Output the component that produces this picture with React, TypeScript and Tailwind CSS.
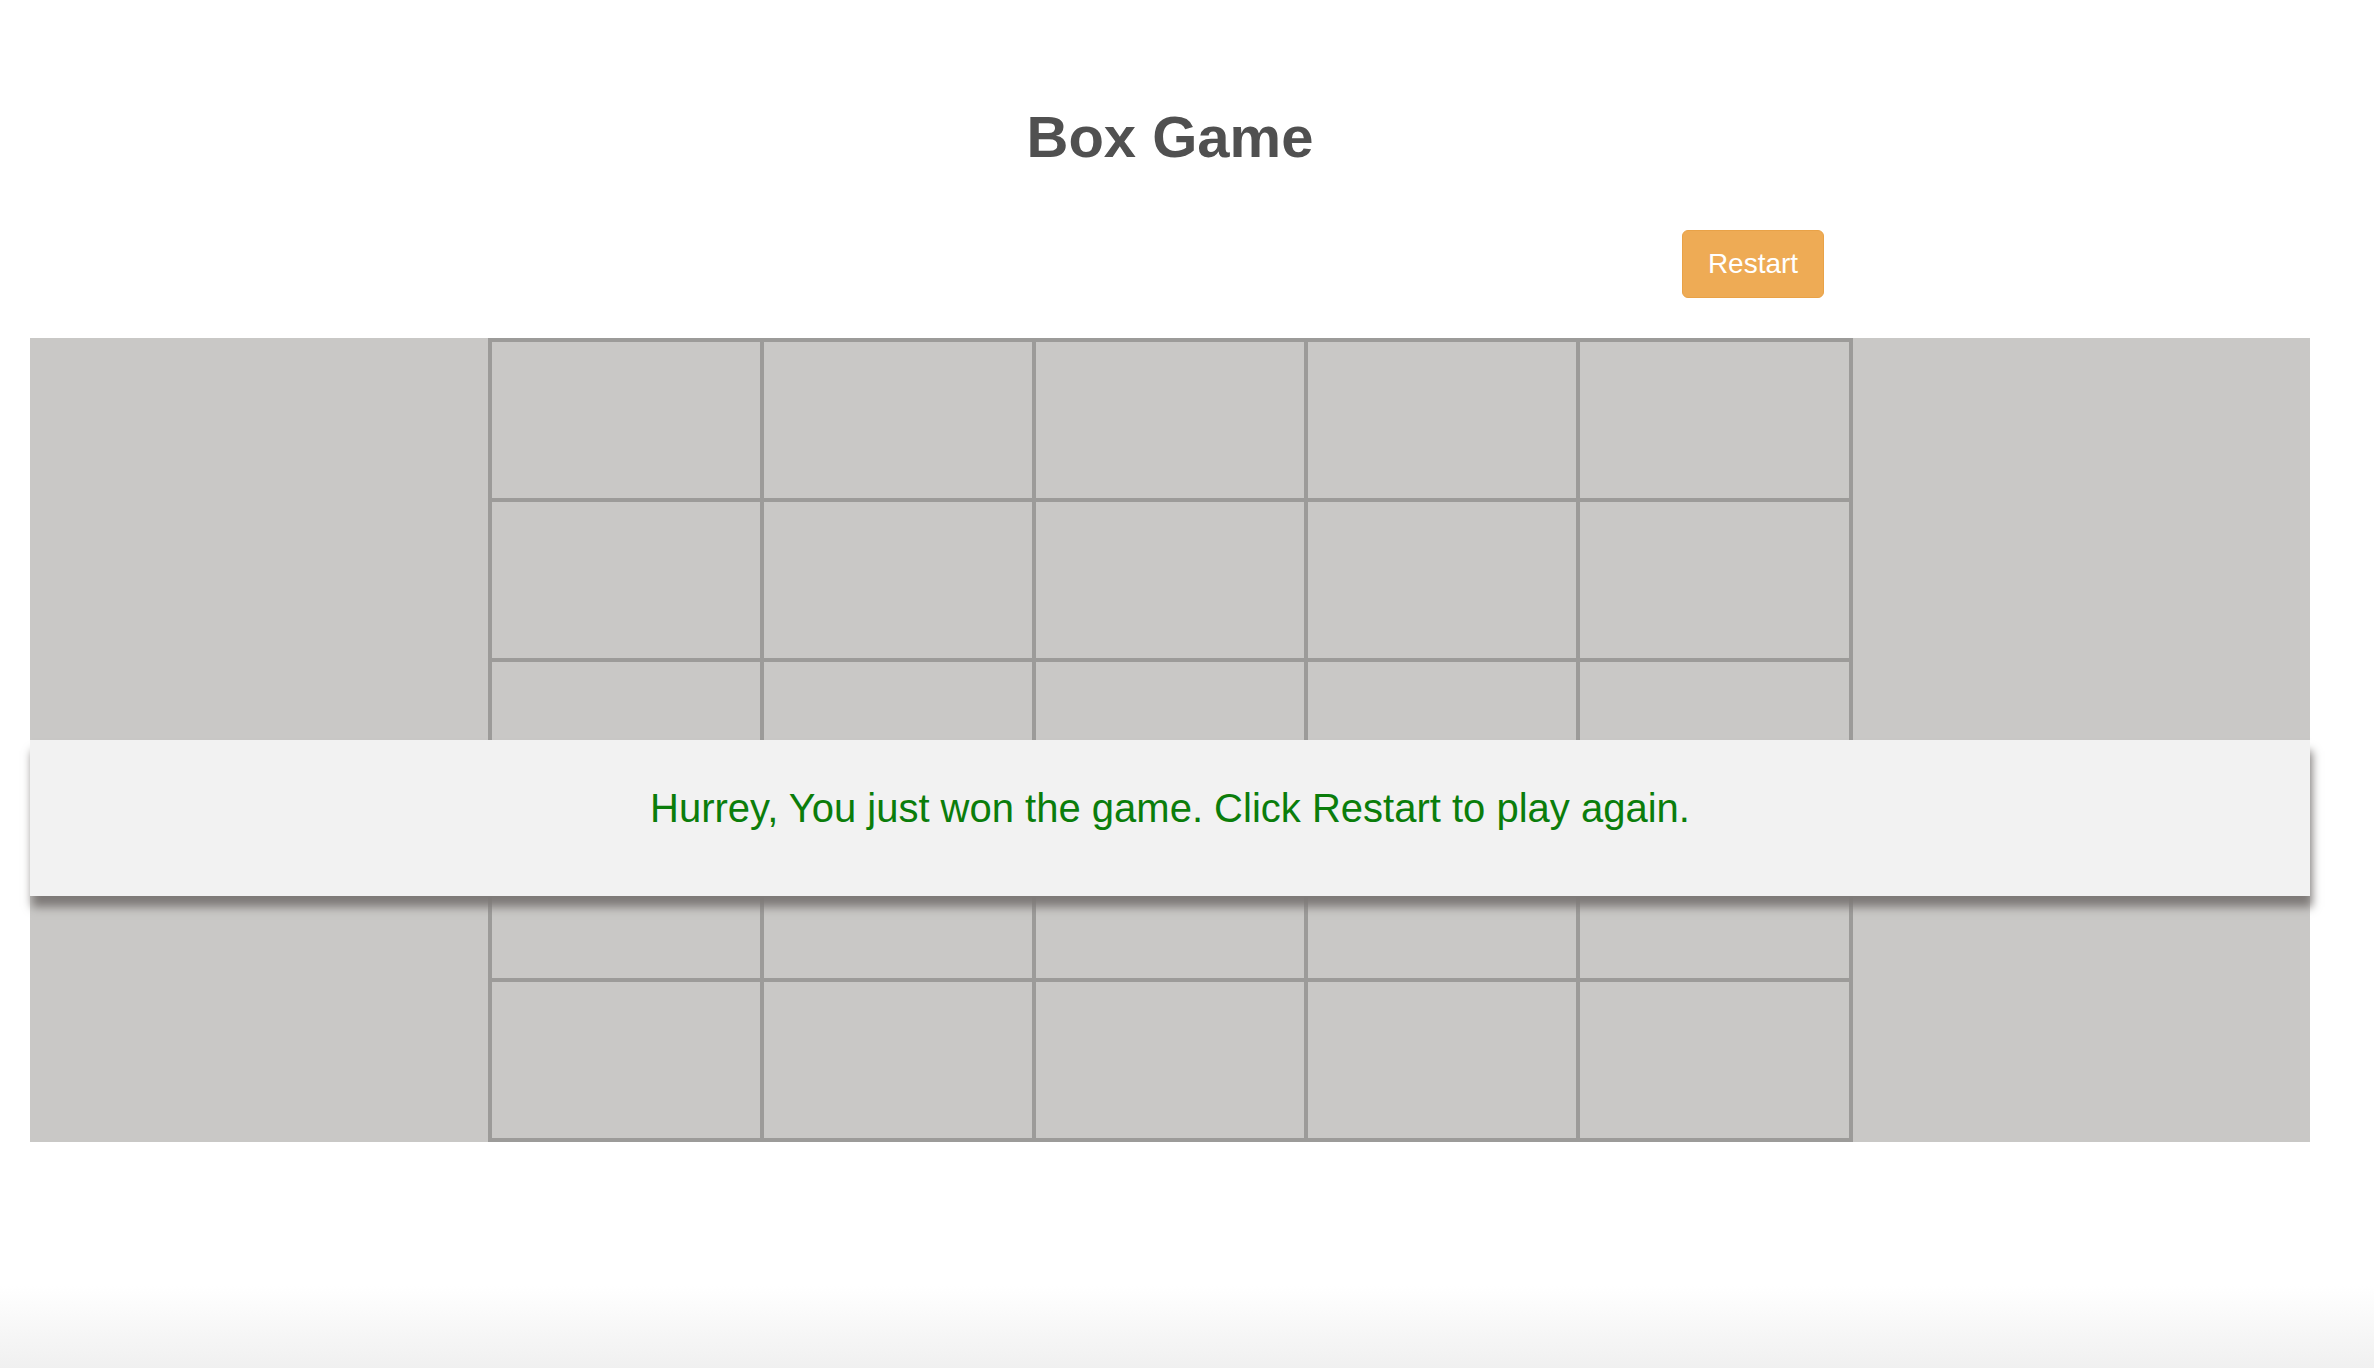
import React from 'react';

const ROWS = 5;
const COLS = 5;

export default function App() {
  const cells = Array.from({ length: ROWS * COLS }, (_, i) => i);

  return (
    <div
      className="min-h-screen w-full bg-[linear-gradient(to_bottom,#ffffff_94%,#f0f0f0)]"
      style={{ fontFamily: '"Liberation Sans", Arial, sans-serif' }}
    >
      <div className="ml-[30px] w-[2280px] flex flex-col">
        {/* Title */}
        <h1 className="mt-[108px] text-center text-[58px] leading-none font-bold text-[#505050]">
          Box Game
        </h1>

        {/* Controls */}
        <div className="mt-[64px] flex justify-end pr-[486px]">
          <button className="h-[68px] w-[142px] rounded-[6px] bg-[#eeab55] border border-[#e9a247] text-white text-[28px] leading-none">
            Restart
          </button>
        </div>

        {/* Board */}
        <div className="relative mt-[40px] h-[804px] bg-[#c9c8c6] flex justify-center">
          <div className="w-[1365px] h-full border-2 border-[#9c9b99] grid grid-cols-5 grid-rows-5">
            {cells.map((i) => (
              <div key={i} className="border-2 border-[#9c9b99]" />
            ))}
          </div>

          {/* Win message overlay */}
          <div className="absolute left-0 right-0 top-[402px] h-[156px] bg-[#f2f2f2] shadow-[2px_11px_9px_#7e7a78] flex justify-center pt-[48px]">
            <p className="text-[40px] leading-none text-[#0b7d0b]">
              Hurrey, You just won the game. Click Restart to play again.
            </p>
          </div>
        </div>
      </div>
    </div>
  );
}
